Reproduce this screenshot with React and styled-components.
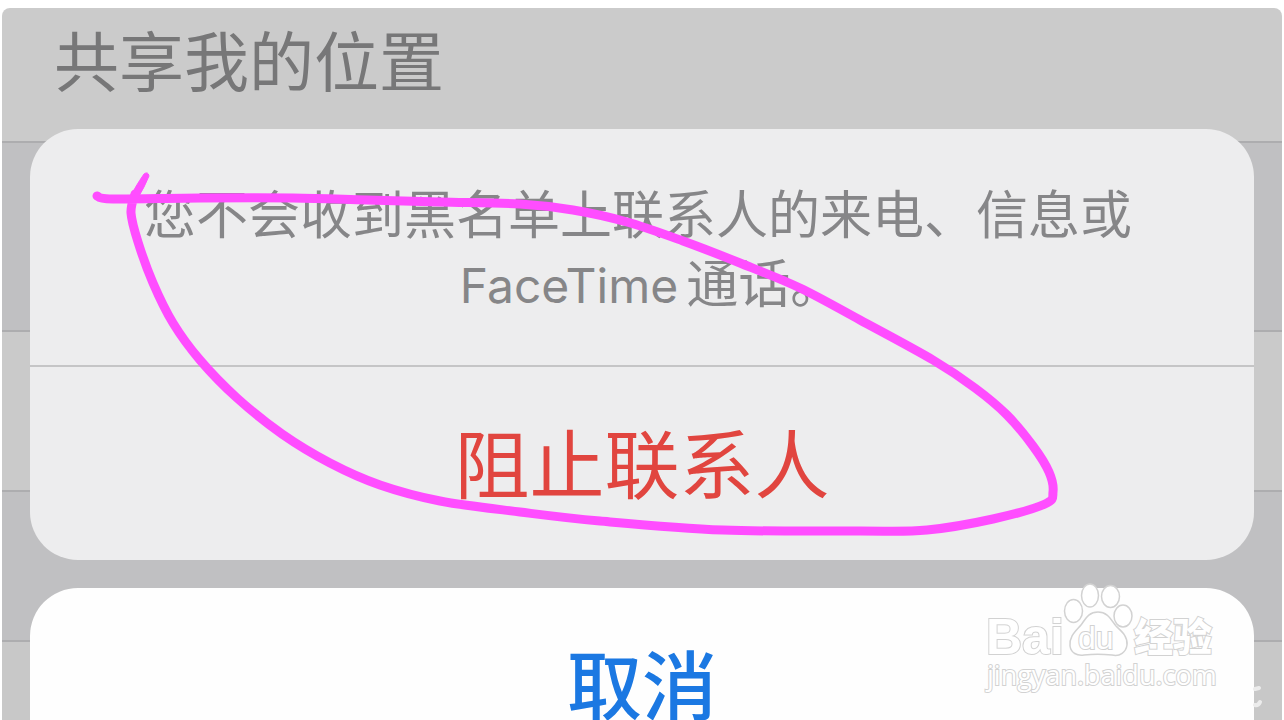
import styled, { createGlobalStyle } from "styled-components";

const rows = [
  { height: 135, bg: "#cbcbcb", label: "共享我的位置" },
  { height: 189, bg: "#c0c0c2" },
  { height: 160, bg: "#cacaca" },
  { height: 150, bg: "#c0c0c2" },
  { height: 160, bg: "#c8c8c8" },
];

// hand drawn loop around the block action
const loop = [
  [97, 196], [113, 199], [200, 198], [293, 198], [367, 200], [440, 202],
  [520, 204], [573, 210], [627, 222], [683, 241], [740, 263], [800, 288],
  [860, 320], [933, 360], [975, 388], [1007, 415], [1033, 446], [1049, 472],
  [1053, 492], [1045, 504], [993, 519], [927, 530], [860, 531], [723, 530],
  [600, 521], [520, 512], [440, 501], [380, 485], [330, 463], [282, 434],
  [237, 398], [200, 360], [173, 323], [153, 283], [138, 242], [131, 213],
  [135, 194],
];

const smooth = (pts) =>
  pts.slice(1).reduce((d, p, i) => {
    const a = pts[i];
    const before = pts[i - 1] || a;
    const after = pts[i + 2] || p;
    const c1 = [a[0] + (p[0] - before[0]) / 6, a[1] + (p[1] - before[1]) / 6];
    const c2 = [p[0] - (after[0] - a[0]) / 6, p[1] - (after[1] - a[1]) / 6];
    return `${d} C${c1} ${c2} ${p}`;
  }, `M${pts[0]}`);

const Marker = () => (
  <MarkerSvg viewBox="0 0 1284 720" preserveAspectRatio="xMidYMin meet" aria-hidden="true">
    <path d={smooth(loop)} />
    <path className="tail" d="M131 196 Q135 187 144 174 Q148 171 149 176 Q144 188 139 196 Z" />
  </MarkerSvg>
);

const Watermark = () => (
  <WatermarkSvg viewBox="0 0 240 120" role="img" aria-label="Baidu 经验">
    <g className="paw">
      <ellipse cx="93.5" cy="31" rx="9" ry="11.5" />
      <ellipse cx="110" cy="15.5" rx="8.5" ry="11.5" />
      <ellipse cx="130.5" cy="16.5" rx="9" ry="11" />
      <ellipse cx="143" cy="36" rx="9" ry="11" />
      <path d="M118 32 C108 32 105 40 101 45 C96 51 89 56 90 66 C91 73 97 76 104 75 C113 74 122 74 132 75 C140 77 146 72 147 65 C148 56 141 51 136 46 C131 40 128 32 118 32 Z" />
    </g>
    <text className="latin" x="6" y="74">Bai</text>
    <text className="du" x="98" y="69">du</text>
    <text className="cjk" x="154" y="71">经验</text>
    <text className="site" x="7" y="105">jingyan.baidu.com</text>
    <g className="edge">
      <path d="M275 109 l4 -1" />
      <path d="M275 125 q3 1 5 -3" />
    </g>
  </WatermarkSvg>
);

const App = () => {
  return (
    <>
      <GlobalStyle />
      <Page>
        <Screen>
          <Backdrop>
            {rows.map((row, i) => (
              <Row key={i} $height={row.height} $bg={row.bg}>
                {row.label}
              </Row>
            ))}
          </Backdrop>
          <Sheet role="dialog" aria-label="阻止联系人">
            <Card $bg="#ededee">
              <Message>
                您不会收到黑名单上联系人的来电、信息或
                <br />
                <Latin>FaceTime</Latin>通话<Stop>。</Stop>
              </Message>
              <Action $color="#e1453f">阻止联系人</Action>
            </Card>
            <Card $bg="#fefefe">
              <Action $color="#1b78e2" $strong>
                取消
              </Action>
            </Card>
          </Sheet>
        </Screen>
        <Marker />
        <Watermark />
      </Page>
    </>
  );
};

const GlobalStyle = createGlobalStyle`
  * {
    box-sizing: border-box;
  }

  body {
    margin: 0;
    background: #fff;
    font-family: "Noto Sans CJK SC", sans-serif;
  }
`;

const Page = styled.main`
  position: relative;
  height: 100vh;
  padding: 8px 2px 0;
  overflow: hidden;
`;

const Screen = styled.div`
  display: grid;
  border-radius: 8px 8px 0 0;
  overflow: hidden;
`;

/* the dimmed list and the sheet share one grid cell */
const Backdrop = styled.div`
  grid-area: 1 / 1;
`;

const Row = styled.div`
  height: ${({ $height }) => $height}px;
  padding: 0 52px;
  border-bottom: 2px solid #adadaf;
  background: ${({ $bg }) => $bg};
  color: #777778;
  font-size: 65px;
  line-height: 100px;
`;

const Sheet = styled.section`
  grid-area: 1 / 1;
  display: flex;
  flex-direction: column;
  gap: 28px;
  padding: 121px 28px 0;
`;

const Card = styled.div`
  border-radius: 48px;
  background: ${({ $bg }) => $bg};
  overflow: hidden;
`;

const Message = styled.p`
  margin: 0;
  padding: 48px 8px 50px 0;
  border-bottom: 2px solid #c5c5c6;
  color: #868688;
  font-size: 52px;
  line-height: 69px;
  text-align: center;
  white-space: nowrap;
`;

const Latin = styled.span`
  margin-right: 8px;
  font-family: Inter, sans-serif;
  font-size: 48px;
  line-height: 48px;
`;

/* half-width full stop, so the last line centres on its ink */
const Stop = styled.span`
  font-feature-settings: "halt";
`;

const Action = styled.button`
  display: block;
  width: 100%;
  height: 193px;
  padding: 0 0 6px;
  border: 0;
  background: none;
  color: ${({ $color }) => $color};
  font-family: inherit;
  font-size: 75px;
  font-weight: ${({ $strong }) => ($strong ? 500 : 400)};
  line-height: 75px;
  cursor: pointer;
`;

const MarkerSvg = styled.svg`
  position: absolute;
  top: 0;
  left: 0;
  width: 100%;
  pointer-events: none;

  path {
    fill: none;
    stroke: #ff4dff;
    stroke-width: 9;
    stroke-linecap: round;
    stroke-linejoin: round;
  }

  .tail {
    fill: #ff4dff;
    stroke-width: 1;
  }
`;

const WatermarkSvg = styled.svg`
  position: absolute;
  right: 64px;
  bottom: 20px;
  width: 240px;
  height: 120px;
  overflow: visible;
  pointer-events: none;

  .paw > *,
  text {
    fill: #fff;
    stroke: #d2d2d2;
    stroke-width: 1.5;
  }

  text {
    paint-order: stroke;
    stroke-width: 2;
  }

  .edge path {
    fill: none;
    stroke: #ececec;
    stroke-width: 4;
    stroke-linecap: round;
  }

  .latin {
    font: bold 50px "Liberation Sans", sans-serif;
  }

  .du {
    font: 32px "Liberation Sans", sans-serif;
  }

  .cjk {
    font: 900 39px "Noto Sans CJK SC", sans-serif;
  }

  .site {
    font: 27px "Open Sans", sans-serif;
  }
`;

export default App;
